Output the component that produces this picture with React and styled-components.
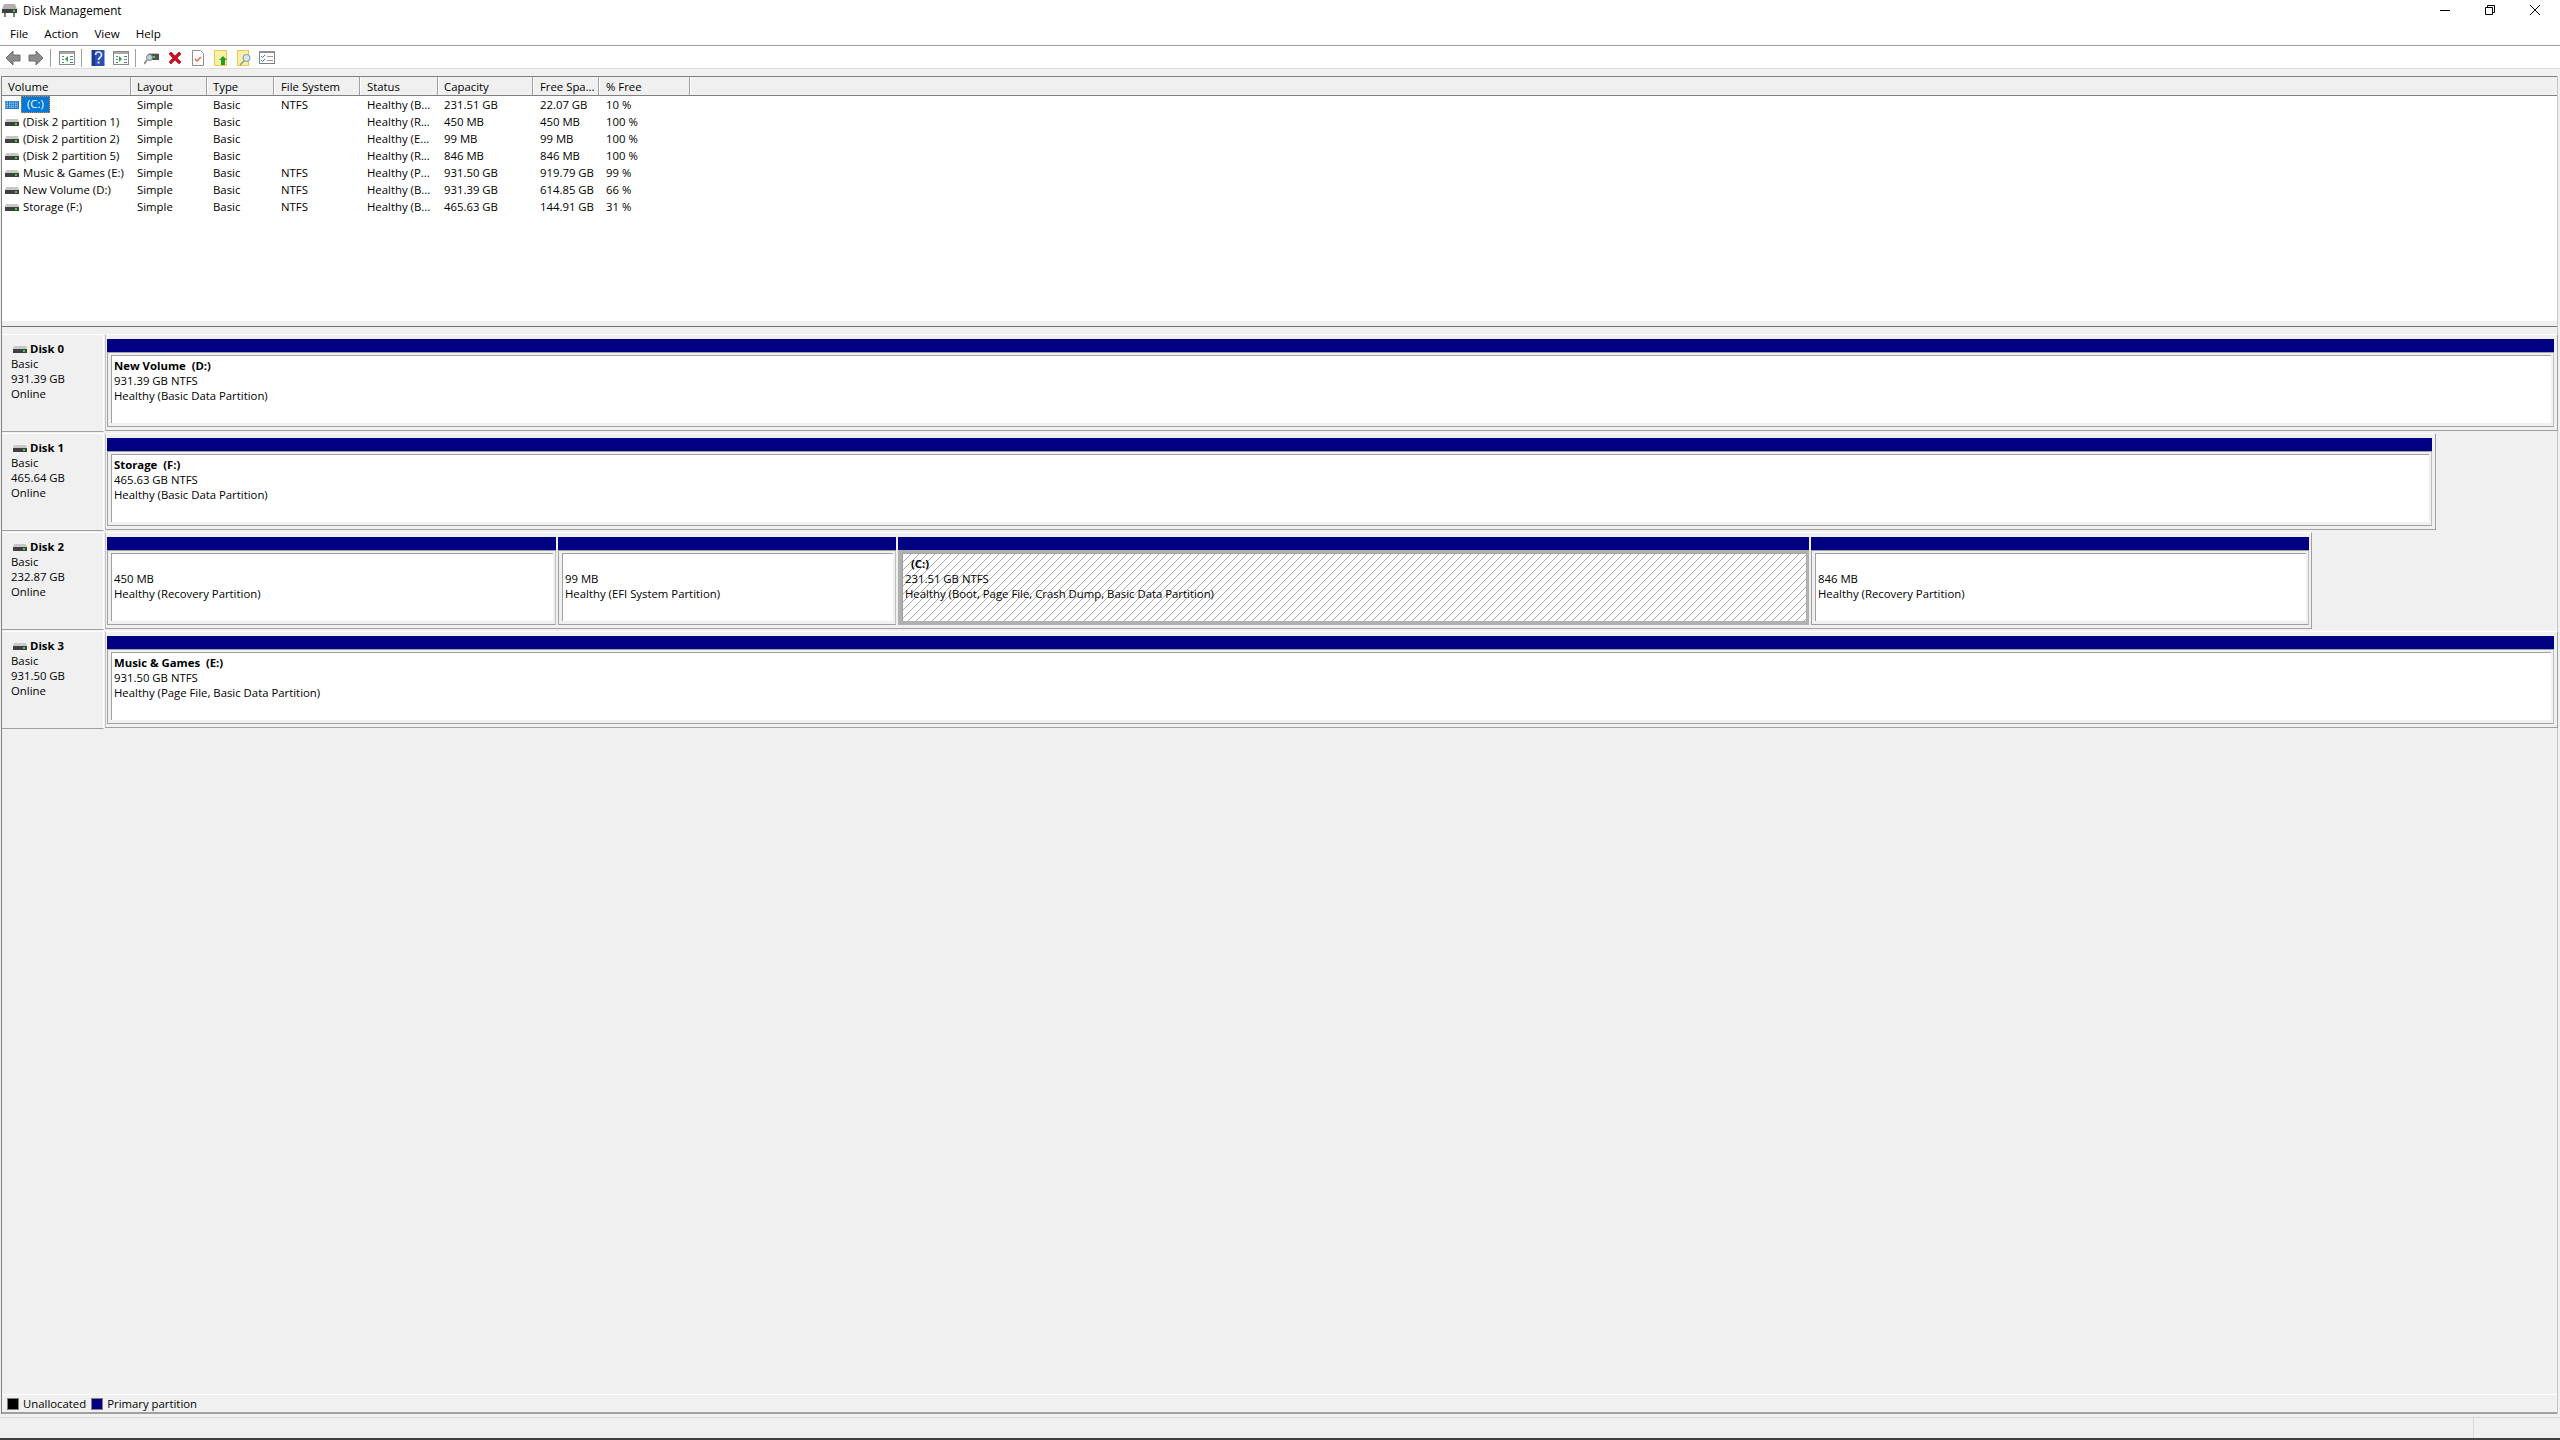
import React from "react";
import styled, { createGlobalStyle } from "styled-components";

const Global = createGlobalStyle`
  html, body { margin: 0; padding: 0; background: #fff; }
  #root { width: 2560px; height: 1440px; }
  * { box-sizing: border-box; }
`;

const Win = styled.div`
  width: 2560px; height: 1440px; display: flex; flex-direction: column; background: #fff;
  font-family: "Open Sans", "Noto Sans", sans-serif; font-size: 11.35px; line-height: 15px; color: #000; overflow: hidden;
`;
const TitleBar = styled.div`height: 20px; display: flex; align-items: center; padding-left: 2px; flex: none;`;
const TitleText = styled.span`margin: 1px 0 0 6px; font-size: 11.7px;`;
const Controls = styled.div`margin-left: auto; margin-right: 3px; display: flex;`;
const Ctl = styled.div`width: 45px; height: 20px; display: flex; align-items: center; justify-content: center;`;
const MenuBar = styled.div`height: 26px; flex: none; display: flex; align-items: center; padding: 1px 0 0 10px; gap: 16px; border-bottom: 1px solid #a0a0a0; font-size: 11.6px;`;
const Toolbar = styled.div`height: 23px; flex: none; display: flex; align-items: center; padding: 2px 0 0 5px; border-bottom: 1px solid #dcdcdc;`;
const Tool = styled.svg`width: 16px; height: 16px; margin-right: 7px; flex: none;`;
const Sep = styled.div`width: 1px; height: 18px; background: #a0a0a0; margin: 0 8px 0 -1px; flex: none;`;
const Frame = styled.div`flex: 1; display: flex; flex-direction: column; background: #f0f0f0; padding-top: 7px;`;
const Pane = styled.div`flex: 1; margin: 0 2px 0 1px; border-left: 1px solid #808080; border-right: 1px solid #c8c8c8; display: flex; flex-direction: column;`;
const Header = styled.div`height: 20px; flex: none; display: flex; background: #f0f0f0; border-top: 1px solid #808080; border-bottom: 1px solid #808080;`;
const HeadCell = styled.div`
  width: ${p => p.$w}px; flex: none; padding-left: ${p => p.$pad}px; line-height: 20px;
  border-right: 1px solid #a0a0a0; box-shadow: 1px 0 0 #fff; overflow: hidden; white-space: nowrap;
`;
const ListArea = styled.div`height: 231px; flex: none; background: #f0f0f0; border-bottom: 1px solid #707070; padding-bottom: 5px;`;
const ListBody = styled.div`height: 225px; background: #fff; overflow: hidden;`;
const Row = styled.div`height: 17px; display: flex; align-items: center;`;
const Cell = styled.div`width: ${p => p.$w}px; flex: none; padding-left: ${p => p.$pad}px; white-space: nowrap; overflow: hidden;`;
const VolCell = styled.div`width: ${p => p.$w}px; flex: none; display: flex; align-items: center; padding-left: 3px; white-space: nowrap;`;
const VolName = styled.span`
  margin-left: ${p => p.$sel ? "2px" : "4px"};
  ${p => p.$sel ? "background:#0078d7;color:#fff;padding:0 6px;height:17px;width:29px;line-height:16px;outline:1px dotted #f08020;outline-offset:-1px;" : ""}
`;
const Disks = styled.div`padding-top: 7px; display: flex; flex-direction: column;`;
const DiskRow = styled.div`height: 99px; display: flex; flex: none;`;
const DiskLabel = styled.div`
  width: 102px; height: 98px; flex: none; border-top: 1px solid #fff; border-bottom: 1px solid #a0a0a0;
  border-right: 1px solid #fff; padding: 6px 0 0 9px; position: relative;
`;
const LabelTitle = styled.div`display: flex; align-items: center; font-weight: 700; gap: 3px; padding-left: 2px;`;
const Track = styled.div`
  width: ${p => p.$w}px; height: 97px; margin-left: 1px; flex: none; display: flex; gap: 2px;
  border-top: 1px solid #fff; border-left: 1px solid #c0c0c0; border-right: 1px solid #a0a0a0; border-bottom: 1px solid #a0a0a0;
  padding: 4px 3px 3px 1px;
`;
const Partition = styled.div`width: ${p => p.$w}px; flex: none; display: flex; flex-direction: column;`;
const CapBar = styled.div`height: 13px; background: #000080; flex: none;`;
const Body = styled.div`
  flex: 1; border: ${p => p.$sel ? "0" : "1px"} solid #a0a0a0; border-right-color: #c0c0c0;
  background: ${p => p.$sel ? "#b0b0b0" : "#f0f0f0"};
  padding: ${p => p.$sel ? "3px 3px 4px 4px" : "2px 2px 3px 3px"};
  display: flex;
`;
const Inner = styled.div`
  flex: 1; min-width: 0; padding: 2px 0 0 2px; border-top: 1px solid #a0a0a0; border-left: 1px solid #a0a0a0;
  background-color: #fff;
  ${p => p.$hatch ? "background-image: linear-gradient(135deg, #fff 0, #fff 45%, #aaa 45%, #aaa 55%, #fff 55%, #fff 100%); background-size: 8px 8px;" : ""}
  white-space: pre; overflow: hidden;
`;
const Bold = styled.div`font-weight: 700; height: 15px;`;
const LowerSpace = styled.div`flex: 1;`;
const Legend = styled.div`height: 20px; flex: none; border-top: 1px solid #fff; border-bottom: 2px solid #a0a0a0; display: flex; align-items: center; padding-left: 5px; margin-bottom: 0;`;
const Swatch = styled.div`width: 12px; height: 12px; background: ${p => p.$c}; border: 1px solid #808080; margin-right: 4px;`;
const LegendText = styled.span`margin-right: 5px;`;
const Gap = styled.div`height: 3px; flex: none; background: #f0f0f0;`;
const Status = styled.div`height: 23px; flex: none; display: flex; justify-content: flex-end; border-top: 1px solid #d8d8d8; border-bottom: 2px solid #404040; padding-right: 2px;`;
const StatusCell = styled.div`width: ${p => p.$w}px; border-left: 1px solid #d8d8d8;`;

const Drive = ({ sel }) => (
  <svg width="14" height="10" viewBox="0 0 14 10" style={{ flex: "none" }}>
    {sel ? (
      <>
        <rect x="0" y="1" width="14" height="8" fill="#1e78c8" />
        <path d="M0 3h14M0 5h14M0 7h14M2 1v8M5 1v8M8 1v8M11 1v8" stroke="#a8d4f0" strokeWidth="1" strokeDasharray="1 1" />
      </>
    ) : (
      <>
        <path d="M1 2h12l1 3H0z" fill="#c8c8c8" />
        <rect x="0" y="5" width="14" height="4" fill="#404040" />
        <rect x="10" y="6" width="2" height="2" fill="#40d040" />
      </>
    )}
  </svg>
);

const Arrow = ({ right }) => (
  <Tool viewBox="0 0 16 16">
    <path d={right ? "M1 5h7V1l7 7-7 7v-4H1z" : "M15 5H8V1L1 8l7 7v-4h7z"} fill="#8c8c8c" stroke="#6e6e6e" />
  </Tool>
);
const PaneIcon = ({ arrow }) => (
  <Tool viewBox="0 0 16 16">
    <rect x=".5" y="1.5" width="15" height="13" fill="#fff" stroke="#8a8a8a" />
    <rect x="1" y="2" width="14" height="2" fill="#a8a8a8" />
    <path d="M3 6h2v1H3zM3 9h2v1H3zM3 12h2v1H3zM11 6h3v1h-3zM11 9h3v1h-3zM11 12h3v1h-3z" fill="#5a7f9a" />
    <path d={arrow === "l" ? "M9 6v6L6 9z" : "M6 6v6l3-3z"} fill="#28a828" />
  </Tool>
);
const Help = () => (
  <Tool viewBox="0 0 16 16">
    <rect x="1.5" y="0" width="13" height="16" fill="#2b50b0" />
    <rect x="2" y="0" width="3" height="16" fill="#1a3a90" />
    <path d="M5.5 5c0-4 6-4 6 0 0 2.5-3 2.5-3 5" fill="none" stroke="#dfe7ff" strokeWidth="1.7" />
    <rect x="7.5" y="11.5" width="2" height="2" fill="#dfe7ff" />
  </Tool>
);
const Connect = () => (
  <Tool viewBox="0 0 16 16">
    <path d="M4 4h11v6H4z" fill="#505050" />
    <path d="M5 3h9l1 1H4z" fill="#c0c0c0" />
    <rect x="9" y="6" width="2" height="2" fill="#40e040" />
    <circle cx="5.5" cy="7.5" r="3" fill="#b8d0e0" stroke="#808080" />
    <path d="M3 10l-3 4" stroke="#909090" strokeWidth="2" />
  </Tool>
);
const Del = () => (
  <Tool viewBox="0 0 16 16">
    <path d="M2 4l2-2 4 4 4-4 2 2-4 4 4 4-2 2-4-4-4 4-2-2 4-4z" fill="#d01020" stroke="#a00818" strokeWidth=".7" />
  </Tool>
);
const Doc = () => (
  <Tool viewBox="0 0 16 16">
    <path d="M2.5.5h8l3 3v12h-11z" fill="#fff" stroke="#909090" />
    <path d="M5 9l2 2 4-4" fill="none" stroke="#e8602c" strokeWidth="1.3" />
  </Tool>
);
const FolderUp = () => (
  <Tool viewBox="0 0 16 16">
    <rect x="1.5" y=".5" width="12" height="15" fill="#fdeea8" stroke="#e8c858" />
    <path d="M10 6l4 4h-2v5H8v-5H6z" fill="#20a020" />
  </Tool>
);
const FolderFind = () => (
  <Tool viewBox="0 0 16 16">
    <rect x="1.5" y=".5" width="11" height="15" fill="#fdeea8" stroke="#e8c858" />
    <circle cx="10.5" cy="8" r="3.5" fill="#d8e8f0" stroke="#7f98a8" />
    <path d="M8 11l-4 4" stroke="#909090" strokeWidth="1.5" />
  </Tool>
);
const Checks = () => (
  <Tool viewBox="0 0 16 16">
    <rect x=".5" y="1.5" width="15" height="12" fill="#fff" stroke="#808080" />
    <rect x="0" y="1" width="16" height="2" fill="#909090" />
    <path d="M2 6l1.5 1.5L6 5M2 10l1.5 1.5L6 9" fill="none" stroke="#2b78d0" />
    <path d="M8 6.5h6M8 10.5h6" stroke="#a0a0a0" />
  </Tool>
);

const cols = [129, 76, 67, 86, 78, 95, 66, 91];
const pads = [6, 6, 6, 7, 7, 6, 7, 7];
const heads = ["Volume", "Layout", "Type", "File System", "Status", "Capacity", "Free Spa...", "% Free"];
const rows = [
  ["(C:)", "Simple", "Basic", "NTFS", "Healthy (B...", "231.51 GB", "22.07 GB", "10 %"],
  ["(Disk 2 partition 1)", "Simple", "Basic", "", "Healthy (R...", "450 MB", "450 MB", "100 %"],
  ["(Disk 2 partition 2)", "Simple", "Basic", "", "Healthy (E...", "99 MB", "99 MB", "100 %"],
  ["(Disk 2 partition 5)", "Simple", "Basic", "", "Healthy (R...", "846 MB", "846 MB", "100 %"],
  ["Music & Games (E:)", "Simple", "Basic", "NTFS", "Healthy (P...", "931.50 GB", "919.79 GB", "99 %"],
  ["New Volume (D:)", "Simple", "Basic", "NTFS", "Healthy (B...", "931.39 GB", "614.85 GB", "66 %"],
  ["Storage (F:)", "Simple", "Basic", "NTFS", "Healthy (B...", "465.63 GB", "144.91 GB", "31 %"],
];
const disks = [
  { name: "Disk 0", size: "931.39 GB", w: 2453, parts: [{ w: 2447, name: "New Volume  (D:)", a: "931.39 GB NTFS", b: "Healthy (Basic Data Partition)" }] },
  { name: "Disk 1", size: "465.64 GB", w: 2331, parts: [{ w: 2325, name: "Storage  (F:)", a: "465.63 GB NTFS", b: "Healthy (Basic Data Partition)" }] },
  { name: "Disk 2", size: "232.87 GB", w: 2207, parts: [
    { w: 449, name: "", a: "450 MB", b: "Healthy (Recovery Partition)" },
    { w: 338, name: "", a: "99 MB", b: "Healthy (EFI System Partition)" },
    { w: 911, name: "  (C:)", a: "231.51 GB NTFS", b: "Healthy (Boot, Page File, Crash Dump, Basic Data Partition)", sel: true },
    { w: 498, name: "", a: "846 MB", b: "Healthy (Recovery Partition)" },
  ] },
  { name: "Disk 3", size: "931.50 GB", w: 2453, parts: [{ w: 2447, name: "Music & Games  (E:)", a: "931.50 GB NTFS", b: "Healthy (Page File, Basic Data Partition)" }] },
];

export default function App() {
  return (
    <Win>
      <Global />
      <TitleBar>
        <svg width="15" height="14" viewBox="0 0 15 14">
          <path d="M2 1h11l2 5H0z" fill="#b0b0b0" />
          <rect x="0" y="6" width="15" height="4" fill="#404040" />
          <rect x="11" y="7" width="2" height="2" fill="#40d040" />
          <path d="M2 10h2v4H2zM11 10h2v4h-2z" fill="#808080" />
        </svg>
        <TitleText>Disk Management</TitleText>
        <Controls>
          <Ctl><svg width="10" height="10"><path d="M0 5.5h10" stroke="#000" /></svg></Ctl>
          <Ctl><svg width="10" height="10"><path d="M.5 2.5h7v7h-7zM2.5 2.5v-2h7v7h-2" fill="none" stroke="#000" /></svg></Ctl>
          <Ctl><svg width="10" height="10"><path d="M0 0l10 10M10 0L0 10" stroke="#000" /></svg></Ctl>
        </Controls>
      </TitleBar>
      <MenuBar><span>File</span><span>Action</span><span>View</span><span>Help</span></MenuBar>
      <Toolbar>
        <Arrow /><Arrow right /><Sep />
        <PaneIcon arrow="l" /><Sep />
        <Help /><PaneIcon arrow="r" /><Sep />
        <Connect /><Del /><Doc /><FolderUp /><FolderFind /><Checks />
      </Toolbar>
      <Frame>
        <Pane>
          <Header>
            {heads.map((h, i) => <HeadCell key={h} $w={cols[i]} $pad={pads[i]}>{h}</HeadCell>)}
          </Header>
          <ListArea>
            <ListBody>
              {rows.map((r, i) => (
                <Row key={r[0]}>
                  <VolCell $w={cols[0]}>
                    <Drive sel={i === 0} />
                    <VolName $sel={i === 0}>{r[0]}</VolName>
                  </VolCell>
                  {r.slice(1).map((c, j) => <Cell key={j} $w={cols[j + 1]} $pad={pads[j + 1]}>{c}</Cell>)}
                </Row>
              ))}
            </ListBody>
          </ListArea>
          <Disks>
            {disks.map(d => (
              <DiskRow key={d.name}>
                <DiskLabel>
                  <LabelTitle><Drive />{d.name}</LabelTitle>
                  <div>Basic</div>
                  <div>{d.size}</div>
                  <div>Online</div>
                </DiskLabel>
                <Track $w={d.w}>
                  {d.parts.map((p, i) => (
                    <Partition key={i} $w={p.w}>
                      <CapBar />
                      <Body $sel={p.sel}>
                        <Inner $hatch={p.sel}>
                          <Bold>{p.name}</Bold>
                          <div>{p.a}</div>
                          <div>{p.b}</div>
                        </Inner>
                      </Body>
                    </Partition>
                  ))}
                </Track>
              </DiskRow>
            ))}
          </Disks>
          <LowerSpace />
          <Legend>
            <Swatch $c="#000" /><LegendText>Unallocated</LegendText>
            <Swatch $c="#000080" /><LegendText>Primary partition</LegendText>
          </Legend>
        </Pane>
        <Gap />
        <Status>
          <StatusCell $w={85} />
        </Status>
      </Frame>
    </Win>
  );
}
